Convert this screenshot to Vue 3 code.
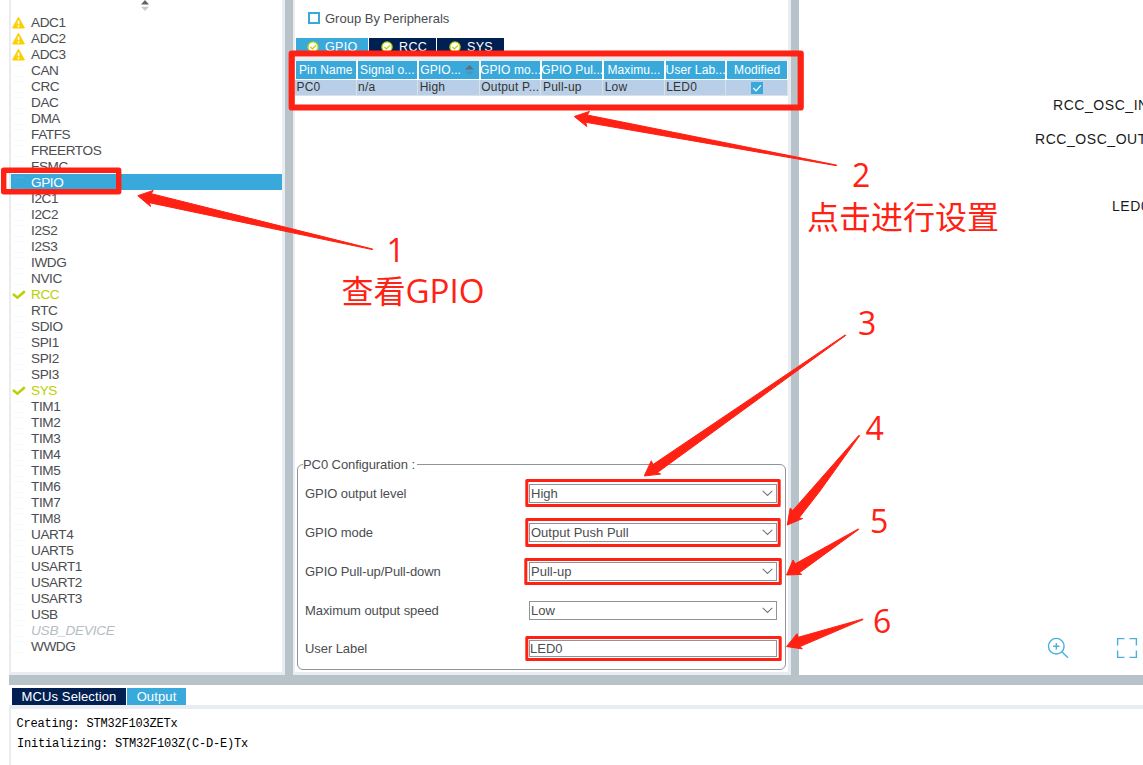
<script setup>
const peripherals = [
  'ADC1', 'ADC2', 'ADC3', 'CAN', 'CRC', 'DAC', 'DMA', 'FATFS', 'FREERTOS', 'FSMC', 'GPIO',
  'I2C1', 'I2C2', 'I2S2', 'I2S3', 'IWDG', 'NVIC', 'RCC', 'RTC', 'SDIO', 'SPI1', 'SPI2', 'SPI3',
  'SYS', 'TIM1', 'TIM2', 'TIM3', 'TIM4', 'TIM5', 'TIM6', 'TIM7', 'TIM8', 'UART4', 'UART5',
  'USART1', 'USART2', 'USART3', 'USB', 'USB_DEVICE', 'WWDG',
]
const warn = ['ADC1', 'ADC2', 'ADC3']
const ok = ['RCC', 'SYS']
const tabs = [
  { name: 'GPIO', cls: 'active' },
  { name: 'RCC', cls: 'rcc' },
  { name: 'SYS', cls: 'sys' },
]
const columns = [
  { head: 'Pin Name', value: 'PC0' },
  { head: 'Signal o...', value: 'n/a' },
  { head: 'GPIO...', value: 'High', sort: true },
  { head: 'GPIO mo...', value: 'Output P...' },
  { head: 'GPIO Pul...', value: 'Pull-up' },
  { head: 'Maximu...', value: 'Low' },
  { head: 'User Lab...', value: 'LED0' },
  { head: 'Modified', check: true },
]
const fields = [
  { label: 'GPIO output level', value: 'High', select: true },
  { label: 'GPIO mode', value: 'Output Push Pull', select: true },
  { label: 'GPIO Pull-up/Pull-down', value: 'Pull-up', select: true },
  { label: 'Maximum output speed', value: 'Low', select: true },
  { label: 'User Label', value: 'LED0' },
]
const arrows = [
  '137.8,195.7 153.2,190.4 151.3,193.7 372.6,249 372.4,249.6 149.3,202.7 150.5,206.5',
  '574.2,116.5 589.5,111.4 587.3,115 836.6,165.1 836.5,165.7 585.7,122.3 586.8,126.5',
  '644.2,476 651.3,460.8 653,464.5 845.2,334.9 845.7,335.4 657.5,472.5 660.6,474.1',
  '787.3,525 790.2,508 792.8,510.5 859,435.2 859.6,435.7 820,491 799,518 802.6,518.5',
  '786.5,575 793,560 795.2,563.8 858.4,528.9 858.7,529.4 799,573 801.7,574.4',
  '786.6,646.5 797,633.7 798.2,637.3 862.8,619 863,619.6 800,646.6 802.3,648.9',
]
</script>

<template>
  <div class="app">
    <div class="workspace">
      <aside class="sidebar">
        <svg class="sorter" width="8" height="12" viewBox="0 0 8 12">
          <path d="M0 4.5L4 0L8 4.5Z" fill="#626262" />
          <path d="M0 6.8H8L4 11Z" fill="#c9c9c9" />
        </svg>
        <ul class="list">
          <li
            v-for="p in peripherals"
            :key="p"
            :class="{ selected: p === 'GPIO', good: ok.includes(p), off: p === 'USB_DEVICE' }"
          >
            <span class="mark">
              <svg v-if="warn.includes(p)" width="13" height="12" viewBox="0 0 13 12">
                <path d="M6.5 1L12 10.8H1Z" fill="#fdd006" stroke="#fdd006" stroke-width="1.6" stroke-linejoin="round" />
                <path d="M6.5 3.7V7.3M6.5 8.6V10" stroke="#fff" stroke-width="1.7" />
              </svg>
              <svg v-else-if="ok.includes(p)" width="14" height="10" viewBox="0 0 14 10">
                <path d="M1 4L5.4 7.7L12.8 1.2" fill="none" stroke="#bccf00" stroke-width="2.5" />
              </svg>
              <i v-else class="ghost"></i>
            </span>
            <span class="name">{{ p }}</span>
          </li>
        </ul>
      </aside>
      <div class="splitter"></div>
      <main class="config">
        <label class="group"><i class="box"></i><span>Group By Peripherals</span></label>
        <div class="tabs">
          <div v-for="t in tabs" :key="t.name" class="tab" :class="t.cls">
            <svg width="12" height="12" viewBox="0 0 12 12">
              <circle cx="6" cy="6" r="5.1" fill="#fff" stroke="#bccf00" stroke-width="1.3" />
              <path d="M3.4 6L5.4 7.9L8.9 4.4" fill="none" stroke="#bccf00" stroke-width="1.3" />
            </svg>
            <span>{{ t.name }}</span>
          </div>
        </div>
        <div class="table">
          <div v-for="c in columns" :key="c.head" class="col">
            <div class="th" :class="{ sortable: c.sort }">
              <span>{{ c.head }}</span>
              <svg v-if="c.sort" width="9" height="11" viewBox="0 0 9 11">
                <path d="M0 4.6L4.5 0L9 4.6Z" fill="#666d72" />
                <path d="M0 6.2H9L4.5 10.5Z" fill="#4a98bd" />
              </svg>
            </div>
            <div class="td" :class="{ center: c.check }">
              <svg v-if="c.check" width="12" height="12" viewBox="0 0 12 12">
                <path d="M0 0H12V12H0Z" fill="#39a9dc" />
                <path d="M2.3 6L5 8.8L9.8 3.3" fill="none" stroke="#fff" stroke-width="1.2" />
              </svg>
              <template v-else>{{ c.value }}</template>
            </div>
          </div>
        </div>
        <fieldset class="form">
          <legend>PC0 Configuration :</legend>
          <div v-for="f in fields" :key="f.label" class="field">
            <span class="label">{{ f.label }}</span>
            <div class="input" :class="{ text: !f.select }">
              <span>{{ f.value }}</span>
              <svg v-if="f.select" width="11" height="7" viewBox="0 0 11 7">
                <path d="M.7 .8L5.5 5.5L10.3 .8" fill="none" stroke="#75797c" stroke-width="1.1" />
              </svg>
            </div>
          </div>
        </fieldset>
      </main>
      <div class="splitter"></div>
      <section class="canvas">
        <svg width="344" height="675" viewBox="799 0 344 675">
          <g class="pins">
            <text x="1053" y="110">RCC_OSC_IN</text>
            <text x="1035" y="144">RCC_OSC_OUT</text>
            <text x="1112" y="211">LED0</text>
          </g>
          <g fill="none" stroke="#4bb0df" stroke-width="1.4">
            <circle cx="1056.3" cy="646.2" r="7.8" />
            <path d="M1062 652L1068 657.8M1056.3 643V649.4M1053.1 646.2H1059.5" />
            <path d="M1117.6 645.5V638.6H1124.5M1129.5 638.6H1136.4V645.5M1136.4 650.5V657.4H1129.5M1124.5 657.4H1117.6V650.5" />
          </g>
        </svg>
      </section>
    </div>
    <div class="divider"></div>
    <footer class="output">
      <div class="out-tabs">
        <div class="out-tab mcus">MCUs Selection</div>
        <div class="out-tab out">Output</div>
      </div>
      <div class="log">
        <p>Creating: STM32F103ZETx</p>
        <p class="second">Initializing: STM32F103Z(C-D-E)Tx</p>
      </div>
    </footer>

    <svg class="notes" width="1143" height="765" viewBox="0 0 1143 765">
      <g fill="none" stroke="#ff2113" stroke-linejoin="round">
        <rect x="3.7" y="170.2" width="115" height="21.6" stroke-width="5.4" />
        <rect x="291.7" y="53.5" width="509" height="54" stroke-width="6.2" />
        <g stroke-width="3">
          <rect x="526.8" y="480.5" width="252.4" height="25" />
          <rect x="526.8" y="519.5" width="252.4" height="26" />
          <rect x="525.8" y="559.5" width="254.5" height="24" />
          <rect x="526.8" y="637.5" width="253.4" height="22" />
        </g>
      </g>
      <g fill="#ff2113" stroke="#ff2113" stroke-width="1" stroke-linejoin="round">
        <polygon v-for="a in arrows" :key="a" :points="a" />
      </g>
      <g class="note">
        <text x="386.5" y="262">1</text>
        <text x="341.5" y="303" textLength="64">查看</text>
        <text x="405.5" y="303" textLength="79" lengthAdjust="spacingAndGlyphs">GPIO</text>
        <text x="852" y="187">2</text>
        <text x="807" y="228.7">点击进行设置</text>
        <text x="858" y="335">3</text>
        <text x="865.5" y="440">4</text>
        <text x="870" y="533">5</text>
        <text x="873" y="633">6</text>
      </g>
    </svg>
  </div>
</template>

<style>
body {
  background: #fff;
  overflow: hidden;
}
</style>

<style scoped>
.app {
  position: relative;
  display: flex;
  flex-direction: column;
  width: 1143px;
  height: 765px;
  overflow: hidden;
  box-sizing: border-box;
  padding-left: 9px;
  background: #fff;
  color: #4b4d50;
  font-family: "Liberation Sans", Arial, sans-serif;
  font-size: 13px;
}
.workspace {
  display: flex;
  height: 675px;
}
.splitter {
  width: 8px;
  background: #b8c3c9;
}
.sidebar {
  width: 276px;
  box-sizing: border-box;
  border: solid #e9edf1;
  border-width: 0 3px 3px 2px;
}
.sorter {
  display: block;
  margin: 0 0 0 130px;
}
.list {
  list-style: none;
  margin: 2px 0 0;
  padding: 0;
}
.list li {
  display: flex;
  height: 16px;
  line-height: 18px;
  font-size: 13.6px;
  letter-spacing: -0.4px;
}
.mark {
  display: flex;
  align-items: center;
  width: 18px;
  margin-right: 2px;
  padding: 1px 0 0 1px;
  box-sizing: border-box;
}
.ghost {
  width: 10px;
  height: 10px;
  margin-left: 2px;
  border: dashed #f7f8f9;
  border-width: 1px 0;
}
.selected {
  background: #39a9dc;
  color: #fff;
}
.selected .ghost {
  border-color: #46afdf;
}
.good {
  color: #bccf00;
}
.off {
  color: #b5bec4;
  font-style: italic;
}
.list .off .name {
  letter-spacing: -0.25px;
}
.config {
  width: 498px;
  box-sizing: border-box;
  border: solid #e9edf1;
  border-width: 0 3px 3px 2px;
  display: flex;
  flex-direction: column;
}
.group {
  display: flex;
  align-items: center;
  height: 18px;
  margin: 9px 0 11px 13px;
}
.box {
  width: 8px;
  height: 8px;
  border: 2px solid #39a9dc;
  margin-right: 5px;
}
.tabs {
  display: flex;
  gap: 1px;
  height: 19px;
  padding-left: 1px;
}
.tab {
  display: flex;
  align-items: center;
  gap: 6px;
  height: 17px;
  box-sizing: border-box;
  width: 67px;
  padding-left: 12px;
  background: #002052;
  color: #fff;
  letter-spacing: 0.35px;
  font-size: 12.5px;
}
.tab span {
  margin-top: 1px;
}
.tab.active {
  width: 72px;
  padding-left: 11px;
  background: #39a9dc;
}
.table {
  display: flex;
  border-top: 4px solid #e9edf1;
  font-size: 12px;
  letter-spacing: 0.2px;
}
.col {
  width: 61.7px;
}
.th {
  display: flex;
  align-items: center;
  justify-content: center;
  height: 18px;
  margin: 0 0 0 1px;
  border-right: 1px solid #fff;
  background: #39a9dc;
  color: #fff;
  white-space: nowrap;
  letter-spacing: 0.12px;
}
.th.sortable {
  justify-content: space-between;
  padding: 0 5px 0 1px;
}
.td {
  height: 15px;
  line-height: 15px;
  margin-top: 1px;
  padding-left: 1.5px;
  background: #b8cfe7;
  color: #333;
  border: solid #d8e0e8;
  border-width: 0 1px 1px 0;
  white-space: nowrap;
}
.td.center {
  display: flex;
  align-items: center;
  justify-content: center;
}
.form {
  width: 489px;
  height: 214px;
  box-sizing: border-box;
  margin: auto 0 2px 2px;
  padding: 0 0 0 7px;
  border: 1px solid #8e9499;
  border-radius: 6px;
  min-width: 0;
}
.form legend {
  height: 16px;
  line-height: 17px;
  margin-left: -2px;
  padding: 0 2px 0 0;
  letter-spacing: -0.08px;
}
.field {
  display: flex;
  align-items: center;
  height: 39px;
}
.field:first-of-type {
  margin-top: 2px;
}
.label {
  width: 224px;
  letter-spacing: -0.07px;
}
.input {
  display: flex;
  align-items: center;
  justify-content: space-between;
  width: 248px;
  height: 19px;
  box-sizing: border-box;
  border: 1px solid #8e9499;
  padding: 0 3px 0 1px;
}
.input.text {
  height: 17px;
  padding-left: 0;
}
.field:last-child {
  height: 37px;
}
.canvas {
  flex: 1;
  overflow: hidden;
}
.canvas svg {
  display: block;
}
.pins {
  fill: #1a1a1a;
  font-size: 14px;
  letter-spacing: 0.55px;
}
.divider {
  height: 10px;
  background: #b8c3c9;
}
.output {
  flex: 1;
  display: flex;
  flex-direction: column;
}
.out-tabs {
  display: flex;
  gap: 1px;
  padding: 3px 0 0 3px;
}
.out-tab {
  height: 17px;
  line-height: 17px;
  text-align: center;
  color: #fff;
  letter-spacing: 0.12px;
}
.mcus {
  width: 114px;
  background: #002052;
}
.out {
  width: 59px;
  background: #39a9dc;
}
.log {
  flex: 1;
  border: solid #e9edf1;
  border-width: 4px 0 0 2px;
  padding: 5px 0 0 5.5px;
  color: #000;
  font-family: "Liberation Mono", monospace;
  font-size: 12px;
  letter-spacing: -0.2px;
}
.log p {
  margin: 0;
  height: 20px;
  line-height: 20px;
}
.log .second {
  padding-left: 0.5px;
}
.notes {
  position: absolute;
  left: 0;
  top: 0;
}
.note {
  fill: #ff2113;
  font-family: "Open Sans", "Noto Sans CJK SC", sans-serif;
  font-size: 32px;
}
</style>
